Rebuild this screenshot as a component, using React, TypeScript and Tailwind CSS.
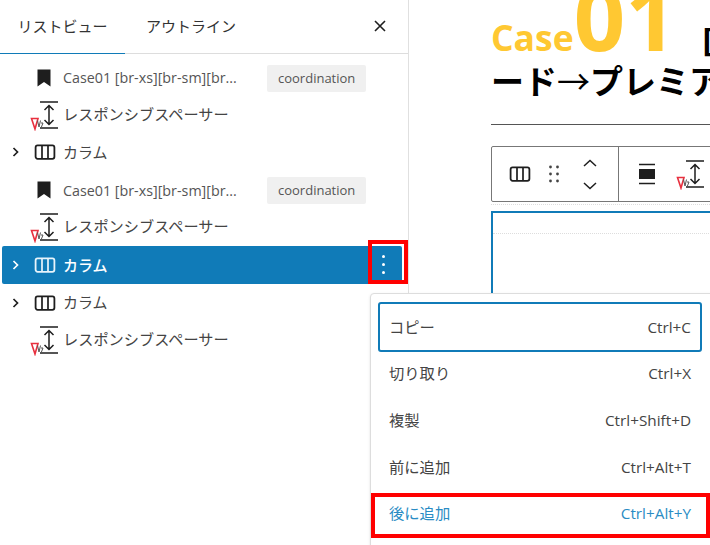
const font = { jp: "font-['Open_Sans','Noto_Sans_CJK_JP',sans-serif]" };

function BookmarkIcon() {
  return (
    <svg width="24" height="24" viewBox="0 0 24 24" className="shrink-0">
      <path d="M5.500 3.500h13v17l-6.500-4.400L5.500 20.500z" fill="#1e1e1e" />
    </svg>
  );
}

function ColumnsIcon({ color = "#1e1e1e" }: { color?: string }) {
  return (
    <svg width="24" height="24" viewBox="0 0 24 24" fill="none" className="shrink-0">
      <rect x="2.600" y="5.400" width="18.800" height="13.400" rx="2" stroke={color} strokeWidth="1.800" />
      <path d="M9 5.400v13.400M15 5.400v13.400" stroke={color} strokeWidth="1.700" />
    </svg>
  );
}

function SpacerIcon() {
  return (
    <svg width="34" height="32" viewBox="0 0 34 32" fill="none" className="shrink-0">
      <path d="M10 3h18M10 29h18M19 6.500v19M14.500 11 19 6.500l4.500 4.500M14.500 21 19 25.500l4.500-4.500" stroke="#1e1e1e" strokeWidth="1.500" />
      <path d="M1.500 19.500h6.500L5 30z" stroke="#e8303f" strokeWidth="1.600" />
      <path d="M7.500 21.500l1.500 6.500 1.500-6.500M11 24h2l-2 5h2" stroke="#555" strokeWidth="1" />
    </svg>
  );
}

function Chevron({ color = "#1e1e1e" }: { color?: string }) {
  return (
    <svg width="12" height="12" viewBox="0 0 12 12" fill="none" className="shrink-0">
      <path d="M3.500 2 7.500 6l-4 4" stroke={color} strokeWidth="1.700" />
    </svg>
  );
}

function CaseRow() {
  return (
    <div className="flex h-[37.4px] items-center pl-[32px] pt-[1px]">
      <BookmarkIcon />
      <span className="ml-[7px] w-[204px] truncate text-[14.3px] text-[#555]">Case01 [br-xs][br-sm][br...</span>
      <span className="rounded-[2px] bg-[#f0f0f0] px-[11px] py-[3px] text-[13px] leading-[21px] text-[#555]">coordination</span>
    </div>
  );
}

function SpacerRow() {
  return (
    <div className="flex h-[37.4px] items-center pb-[1px] pl-[30px]">
      <SpacerIcon />
      <span className="-ml-[1px] text-[15.2px] text-[#444]">レスポンシブスペーサー</span>
    </div>
  );
}

function ColumnRow() {
  return (
    <div className="flex h-[37.4px] items-center pl-[10px]">
      <Chevron />
      <span className="ml-[11px] flex items-center">
        <ColumnsIcon />
        <span className="ml-[6px] text-[15px] text-[#444]">カラム</span>
      </span>
    </div>
  );
}

function SelectedRow() {
  return (
    <div className="ml-[2px] mr-[6px] flex h-[38px] items-center rounded-[2px] bg-[#107bb8] pl-[8px] pr-[17px] text-white">
      <Chevron color="#fff" />
      <span className="ml-[11px] flex items-center">
        <ColumnsIcon color="#e8f4fb" />
        <span className="ml-[6px] text-[15px] font-medium">カラム</span>
      </span>
      <span className="ml-auto flex flex-col gap-[5px]">
        <span className="h-[3px] w-[3px] rounded-full bg-white" />
        <span className="h-[3px] w-[3px] rounded-full bg-white" />
        <span className="h-[3px] w-[3px] rounded-full bg-white" />
      </span>
    </div>
  );
}

function MenuItem({ label, keys, active, focused }: { label: string; keys: string; active?: boolean; focused?: boolean }) {
  return (
    <div
      className={
        "flex items-center justify-between text-[15.3px] " +
        (focused ? "h-[50px] rounded-[3px] border-2 border-[#107bb8] px-[9px]" : "h-[46.7px] px-[11px]") +
        (active ? " text-[#2a8cc4]" : " text-[#444]")
      }
    >
      <span>{label}</span>
      <span>{keys}</span>
    </div>
  );
}

function Toolbar() {
  return (
    <div className="flex h-[56px] w-[260px] items-center rounded-[2px] border border-[#777]">
      <div className="flex h-full w-[127px] shrink-0 items-center border-r border-[#777] pl-[16px]">
        <ColumnsIcon />
        <svg width="16" height="20" viewBox="0 0 16 20" className="ml-[14px] shrink-0" fill="#444">
          <circle cx="4.500" cy="3" r="1.400" /><circle cx="11.500" cy="3" r="1.400" />
          <circle cx="4.500" cy="10" r="1.400" /><circle cx="11.500" cy="10" r="1.400" />
          <circle cx="4.500" cy="17" r="1.400" /><circle cx="11.500" cy="17" r="1.400" />
        </svg>
        <svg width="16" height="32" viewBox="0 0 16 32" fill="none" className="ml-[20px] shrink-0">
          <path d="M2 8l6-5.500L14 8M2 25l6 5.500L14 25" stroke="#1e1e1e" strokeWidth="1.500" />
        </svg>
      </div>
      <div className="flex items-center pl-[19px]">
        <svg width="18" height="22" viewBox="0 0 18 22" className="shrink-0">
          <path d="M1 1.500h16M1 20.500h16" stroke="#1e1e1e" strokeWidth="1.500" />
          <rect x="1" y="6" width="16" height="10" fill="#1e1e1e" />
        </svg>
        <span className="ml-[20px]"><SpacerIcon /></span>
      </div>
    </div>
  );
}

export default function App() {
  return (
    <div className={"relative flex h-[545px] w-[710px] overflow-hidden bg-white " + font.jp}>
      <aside className="w-[409px] shrink-0 border-r border-[#e0e0e0]">
        <div className="flex h-[54px] items-center border-b border-[#ddd] pr-[20px]">
          <div className="relative flex h-full w-[125px] items-center justify-center text-[15px] text-[#333]">
            リストビュー
            <span className="absolute bottom-[-1px] left-0 h-[1.500px] w-full bg-[#107bb8]" />
          </div>
          <div className="flex h-full w-[132px] items-center justify-center text-[15px] text-[#333]">アウトライン</div>
          <svg width="16" height="16" viewBox="0 0 16 16" fill="none" className="ml-auto -translate-y-[1px]">
            <path d="M3 3l10 10M13 3 3 13" stroke="#1e1e1e" strokeWidth="1.600" />
          </svg>
        </div>
        <div className="pt-[5px]">
          <CaseRow />
          <SpacerRow />
          <ColumnRow />
          <CaseRow />
          <SpacerRow />
          <SelectedRow />
          <ColumnRow />
          <SpacerRow />
        </div>
      </aside>

      <main className="min-w-0 flex-1 overflow-hidden pl-[82px]">
        <h1 className="-mt-[23px] h-[82px] whitespace-nowrap font-bold leading-[78px] text-black">
          <span className="text-[35.500px] text-[#ffc832]">Case</span>
          <span className="text-[90px] text-[#ffc832]">01</span>
          <span className="ml-[26px] text-[33px]">[</span>
        </h1>
        <p className="h-[48px] whitespace-nowrap text-[33px] font-bold leading-[46px] text-black">ード<span className="font-normal">→</span>プレミアム</p>
        <div className="mt-[17px] h-px w-[240px] bg-[#555]" />
        <div className="mt-[21px]"><Toolbar /></div>
        <div className="mt-[2px] border-t border-dotted border-[#ddd]" />
        <div className="mt-[6px] h-[100px] w-[260px] border-l-2 border-t-2 border-[#107bb8]">
          <div className="mt-[20px] border-t border-dotted border-[#ddd]" />
        </div>
      </main>

      {/* context menu over the panels */}
      <div className="absolute left-[370px] top-[293px] h-[260px] w-[350px] rounded-tl-[4px] border border-[#ddd] bg-white pl-[7px] pr-[18px] pt-[8px] shadow-sm">
        <div className="w-[324px]">
          <MenuItem label="コピー" keys="Ctrl+C" focused />
          <div className="-mt-[1.500px]" />
          <MenuItem label="切り取り" keys="Ctrl+X" />
          <MenuItem label="複製" keys="Ctrl+Shift+D" />
          <MenuItem label="前に追加" keys="Ctrl+Alt+T" />
          <MenuItem label="後に追加" keys="Ctrl+Alt+Y" active />
        </div>
      </div>

      {/* red annotation boxes */}
      <div className="absolute left-[368px] top-[240px] h-[44px] w-[40px] border-4 border-[#f00]" />
      <div className="absolute left-[371px] top-[493px] h-[45px] w-[339px] border-4 border-[#f00]" />
    </div>
  );
}
